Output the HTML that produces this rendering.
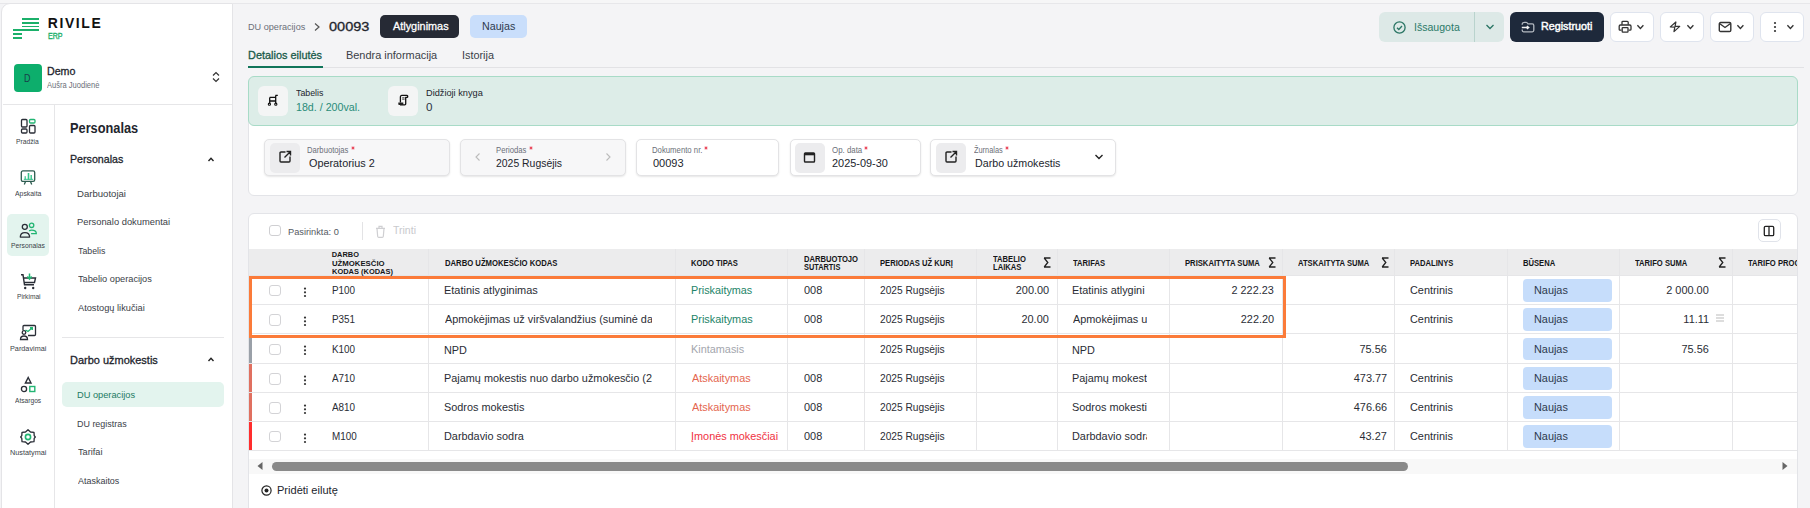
<!DOCTYPE html>
<html><head><meta charset="utf-8"><style>
html,body{margin:0;padding:0;}
body{width:1810px;height:508px;overflow:hidden;background:#f4f4f6;position:relative;font-family:"Liberation Sans",sans-serif;}
.b{position:absolute;}
.t{position:absolute;white-space:nowrap;}
.clip{overflow:hidden;}
</style></head><body>
<div class="b" style="left:0.00px;top:0.00px;width:1810.00px;height:3.00px;background:#f6f6f7;"></div>
<div class="b" style="left:0.00px;top:3.00px;width:1810.00px;height:1.00px;background:#e7e7ea;"></div>
<div class="b" style="left:1.20px;top:3.00px;width:231.80px;height:517.00px;background:#fff;border:1px solid #e4e4e7;border-radius:9px 0 0 0;box-sizing:border-box;"></div>
<div class="b" style="left:22.00px;top:18.10px;width:17.00px;height:1.80px;background:#1bb06a;"></div>
<div class="b" style="left:22.00px;top:21.80px;width:17.00px;height:1.80px;background:#1bb06a;"></div>
<div class="b" style="left:22.00px;top:25.50px;width:17.00px;height:1.80px;background:#1bb06a;"></div>
<div class="b" style="left:13.00px;top:29.30px;width:26.00px;height:1.80px;background:#1bb06a;"></div>
<div class="b" style="left:13.00px;top:33.10px;width:9.00px;height:1.80px;background:#1bb06a;"></div>
<div class="b" style="left:13.00px;top:36.90px;width:9.00px;height:1.80px;background:#1bb06a;"></div>
<div id="t0" class="t" style="left:47.79px;top:17px;font-size:13.95px;line-height:13.95px;font-weight:700;color:#111;letter-spacing:1.6px;">RIVILE</div>
<div id="t1" class="t" style="left:47.81px;top:32px;font-size:8.43px;line-height:8.43px;transform:scaleX(0.8412);transform-origin:left;color:#1bb06a;-webkit-text-stroke:0.35px #1bb06a;">ERP</div>
<div class="b" style="left:14.00px;top:64.00px;width:28.00px;height:28.00px;background:#0dae6c;border-radius:4px;"></div>
<div id="t2" class="t" style="left:24.28px;top:73px;font-size:11.34px;line-height:11.34px;transform:scaleX(0.7875);transform-origin:left;color:#17414a;">D</div>
<div id="t3" class="t" style="left:47.19px;top:66px;font-size:10.61px;line-height:10.61px;transform:scaleX(1.0036);transform-origin:left;font-weight:400;-webkit-text-stroke:0.3px #22252d;color:#22252d;">Demo</div>
<div id="t4" class="t" style="left:47.36px;top:81px;font-size:8.72px;line-height:8.72px;transform:scaleX(0.8656);transform-origin:left;color:#6b6f78;">Aušra Juodienė</div>
<svg class="b" style="left:211.00px;top:71.00px" width="10" height="12" viewBox="0 0 10 12"><path d="M2 4.5 L5 1.5 L8 4.5 M2 7.5 L5 10.5 L8 7.5" fill="none" stroke="#333" stroke-width="1.2"/></svg>
<div class="b" style="left:2.50px;top:104.00px;width:229.50px;height:1.00px;background:#e6e6e8;"></div>
<div class="b" style="left:54.00px;top:105.00px;width:1.00px;height:415.00px;background:#e6e6e8;"></div>
<div class="b" style="left:7.00px;top:214.00px;width:42.00px;height:42.00px;background:#e3f4ee;border-radius:5px;"></div>
<div id="t5" class="t" style="left:15.80px;top:138px;font-size:7.20px;line-height:7.20px;transform:scaleX(0.9360);transform-origin:left;color:#3b3f48;">Pradžia</div>
<div id="t6" class="t" style="left:14.58px;top:190px;font-size:7.20px;line-height:7.20px;transform:scaleX(0.9571);transform-origin:left;color:#3b3f48;">Apskaita</div>
<div id="t7" class="t" style="left:11.19px;top:242px;font-size:7.20px;line-height:7.20px;transform:scaleX(0.9389);transform-origin:left;color:#3b3f48;">Personalas</div>
<div id="t8" class="t" style="left:16.57px;top:293px;font-size:7.20px;line-height:7.20px;transform:scaleX(0.9231);transform-origin:left;color:#3b3f48;">Pirkimai</div>
<div id="t9" class="t" style="left:9.78px;top:345px;font-size:7.20px;line-height:7.20px;transform:scaleX(1.0114);transform-origin:left;color:#3b3f48;">Pardavimai</div>
<div id="t10" class="t" style="left:14.57px;top:397px;font-size:7.20px;line-height:7.20px;transform:scaleX(0.9207);transform-origin:left;color:#3b3f48;">Atsargos</div>
<div id="t11" class="t" style="left:9.78px;top:449px;font-size:7.20px;line-height:7.20px;transform:scaleX(1.0114);transform-origin:left;color:#3b3f48;">Nustatymai</div>
<svg class="b" style="left:20.00px;top:118.00px" width="17" height="17" viewBox="0 0 17 17"><rect x="1.5" y="1.5" width="5.5" height="7.5" rx="1" fill="none" stroke="#2a2e37" stroke-width="1.3"/><rect x="1.5" y="11" width="5.5" height="4" rx="1" fill="none" stroke="#2a2e37" stroke-width="1.3"/><rect x="9.5" y="1.5" width="5.5" height="3.5" rx="1" fill="none" stroke="#22b573" stroke-width="1.3"/><rect x="9.5" y="7.5" width="5.5" height="7.5" rx="1" fill="none" stroke="#2a2e37" stroke-width="1.3"/></svg>
<svg class="b" style="left:20.00px;top:169.00px" width="17" height="17" viewBox="0 0 17 17"><rect x="1.3" y="1.9" width="13.4" height="10.5" rx="1.6" fill="none" stroke="#2d5c50" stroke-width="1.3"/><rect x="4.6" y="7.2" width="1.2" height="3.5" fill="#35c28a"/><rect x="7.7" y="4" width="1.6" height="6.7" fill="#35c28a"/><rect x="10.5" y="6" width="1.4" height="4.7" fill="#35c28a"/><rect x="3.8" y="9.8" width="9.4" height="1" fill="#35c28a"/><path d="M5.4 12.8 L4.3 15.6 M10.6 12.8 L11.7 15.6" stroke="#2d5c50" stroke-width="1.3"/></svg>
<svg class="b" style="left:19.00px;top:222.00px" width="19" height="17" viewBox="0 0 19 17"><circle cx="12.6" cy="3.3" r="2.2" fill="none" stroke="#22b573" stroke-width="1.3"/><path d="M10.1 8.9 C10.9 8.4 11.7 8.2 12.7 8.2 C15.5 8.2 17.3 9.6 17.3 11.6 L12.1 11.6" fill="none" stroke="#22b573" stroke-width="1.3"/><circle cx="5.8" cy="4.8" r="2.5" fill="none" stroke="#2a2e37" stroke-width="1.3"/><path d="M1.3 15.1 C1.3 12.3 3.2 10.6 5.9 10.6 C8.6 10.6 10.6 12.3 10.6 15.1 Z" fill="#e3f4ee" stroke="#2a2e37" stroke-width="1.3" stroke-linejoin="round"/></svg>
<svg class="b" style="left:20.00px;top:273.00px" width="17" height="17" viewBox="0 0 17 17"><path d="M1 1.8 L3 1.8 L4.5 11.8 L14 11.8 M3.8 5 L15.5 5 L14.5 9.5 L4.3 9.5" fill="none" stroke="#2a2e37" stroke-width="1.4"/><circle cx="5.2" cy="15" r="1.2" fill="#2a2e37"/><circle cx="13.2" cy="15" r="1.2" fill="#2a2e37"/><path d="M9.5 0.5 L9.5 5.5 M7.3 3.5 L9.5 6 L11.7 3.5" fill="none" stroke="#22b573" stroke-width="1.5"/></svg>
<svg class="b" style="left:19.00px;top:324.00px" width="18" height="17" viewBox="0 0 18 17"><path d="M4 6 L4 2.5 C4 2 4.5 1.5 5 1.5 L15.5 1.5 C16 1.5 16.5 2 16.5 2.5 L16.5 10.5 C16.5 11 16 11.5 15.5 11.5 L9 11.5" fill="none" stroke="#2a2e37" stroke-width="1.3"/><circle cx="5" cy="8.5" r="1.8" fill="none" stroke="#2a2e37" stroke-width="1.3"/><path d="M1.5 15.5 C1.5 12.5 3 12 5 12 C7 12 8.5 12.5 8.5 15.5 Z" fill="none" stroke="#2a2e37" stroke-width="1.3"/><path d="M6.5 6 L9 7.5 L13 4 M11 3.8 L13.3 3.8 L13.3 6" fill="none" stroke="#22b573" stroke-width="1.4"/></svg>
<svg class="b" style="left:20.00px;top:376.00px" width="17" height="18" viewBox="0 0 17 18"><path d="M8.2 1.5 L11 7 L5.4 7 Z" fill="none" stroke="#2a2e37" stroke-width="1.4"/><circle cx="4" cy="13" r="2.6" fill="none" stroke="#2a2e37" stroke-width="1.3"/><rect x="9.8" y="10.5" width="5" height="5" fill="none" stroke="#22b573" stroke-width="1.4"/></svg>
<svg class="b" style="left:20.00px;top:429.00px" width="16" height="16" viewBox="0 0 16 16"><path d="M8 0.8 L10.5 3 L14 3.3 L14.2 6.6 L15.3 8 L14.2 9.4 L14 12.7 L10.5 13 L8 15.2 L5.5 13 L2 12.7 L1.8 9.4 L0.7 8 L1.8 6.6 L2 3.3 L5.5 3 Z" fill="none" stroke="#2a2e37" stroke-width="1.3" stroke-linejoin="round"/><circle cx="8" cy="8" r="2.6" fill="none" stroke="#22b573" stroke-width="1.6"/></svg>
<div id="t12" class="t" style="left:69.66px;top:121px;font-size:14.10px;line-height:14.10px;transform:scaleX(0.9067);transform-origin:left;font-weight:700;color:#22252d;">Personalas</div>
<div id="t13" class="t" style="left:69.65px;top:154px;font-size:11.48px;line-height:11.48px;transform:scaleX(0.9298);transform-origin:left;font-weight:400;-webkit-text-stroke:0.3px #22252d;color:#22252d;">Personalas</div>
<svg class="b" style="left:207.00px;top:156.00px" width="8" height="7" viewBox="0 0 8 7"><path d="M1.5 5 L4 2.3 L6.5 5" fill="none" stroke="#222" stroke-width="1.4"/></svg>
<div id="t14" class="t" style="left:77.38px;top:190px;font-size:9.30px;line-height:9.30px;transform:scaleX(1.0298);transform-origin:left;color:#3a3e47;">Darbuotojai</div>
<div id="t15" class="t" style="left:77.39px;top:218px;font-size:9.30px;line-height:9.30px;transform:scaleX(1.0054);transform-origin:left;color:#3a3e47;">Personalo dokumentai</div>
<div id="t16" class="t" style="left:78.35px;top:247px;font-size:9.30px;line-height:9.30px;transform:scaleX(0.9433);transform-origin:left;color:#3a3e47;">Tabelis</div>
<div id="t17" class="t" style="left:78.38px;top:275px;font-size:9.30px;line-height:9.30px;transform:scaleX(0.9920);transform-origin:left;color:#3a3e47;">Tabelio operacijos</div>
<div id="t18" class="t" style="left:78.38px;top:304px;font-size:9.30px;line-height:9.30px;transform:scaleX(0.9941);transform-origin:left;color:#3a3e47;">Atostogų likučiai</div>
<div class="b" style="left:62.00px;top:337.00px;width:161.50px;height:1.00px;background:#e6e6e8;"></div>
<div id="t19" class="t" style="left:69.80px;top:355px;font-size:11.19px;line-height:11.19px;transform:scaleX(0.9809);transform-origin:left;-webkit-text-stroke:0.3px #22252d;color:#22252d;">Darbo užmokestis</div>
<svg class="b" style="left:207.00px;top:356.00px" width="8" height="7" viewBox="0 0 8 7"><path d="M1.5 5 L4 2.3 L6.5 5" fill="none" stroke="#222" stroke-width="1.4"/></svg>
<div class="b" style="left:62.40px;top:382.00px;width:161.60px;height:24.50px;background:#e3f4ee;border-radius:5px;"></div>
<div id="t20" class="t" style="left:77.39px;top:391px;font-size:9.30px;line-height:9.30px;transform:scaleX(0.9948);transform-origin:left;color:#1d7a63;">DU operacijos</div>
<div id="t21" class="t" style="left:77.40px;top:420px;font-size:9.30px;line-height:9.30px;transform:scaleX(0.9615);transform-origin:left;color:#3a3e47;">DU registras</div>
<div id="t22" class="t" style="left:78.38px;top:448px;font-size:9.30px;line-height:9.30px;transform:scaleX(0.9846);transform-origin:left;color:#3a3e47;">Tarifai</div>
<div id="t23" class="t" style="left:78.36px;top:477px;font-size:9.30px;line-height:9.30px;transform:scaleX(0.9636);transform-origin:left;color:#3a3e47;">Ataskaitos</div>
<div id="t24" class="t" style="left:248.01px;top:23px;font-size:9.30px;line-height:9.30px;transform:scaleX(0.9810);transform-origin:left;color:#6b6f78;">DU operacijos</div>
<svg class="b" style="left:313.00px;top:22.00px" width="8" height="10" viewBox="0 0 8 10"><path d="M2 1.5 L6 5 L2 8.5" fill="none" stroke="#555" stroke-width="1.2"/></svg>
<div id="t25" class="t" style="left:328.58px;top:20px;font-size:13.52px;line-height:13.52px;transform:scaleX(1.0757);transform-origin:left;-webkit-text-stroke:0.3px #22252d;color:#22252d;">00093</div>
<div class="b" style="left:380.00px;top:15.00px;width:79.00px;height:23.00px;background:#262a35;border-radius:5px;"></div>
<div id="t26" class="t" style="left:392.58px;top:21px;font-size:11.05px;line-height:11.05px;transform:scaleX(0.9842);transform-origin:left;-webkit-text-stroke:0.3px #fff;color:#fff;">Atlyginimas</div>
<div class="b" style="left:470.00px;top:15.00px;width:56.50px;height:23.00px;background:#c9defb;border-radius:5px;"></div>
<div id="t27" class="t" style="left:481.79px;top:21px;font-size:11.05px;line-height:11.05px;transform:scaleX(0.9676);transform-origin:left;color:#2e3a4e;">Naujas</div>
<div id="t28" class="t" style="left:248.40px;top:50px;font-size:11.48px;line-height:11.48px;transform:scaleX(0.9526);transform-origin:left;color:#185a49;-webkit-text-stroke:0.3px #185a49;">Detalios eilutės</div>
<div id="t29" class="t" style="left:345.61px;top:50px;font-size:11.48px;line-height:11.48px;transform:scaleX(0.9531);transform-origin:left;color:#3a3e47;">Bendra informacija</div>
<div id="t30" class="t" style="left:462.40px;top:50px;font-size:11.48px;line-height:11.48px;transform:scaleX(0.9471);transform-origin:left;color:#3a3e47;">Istorija</div>
<div class="b" style="left:248.00px;top:66.50px;width:1556.00px;height:1.00px;background:#e2e2e5;"></div>
<div class="b" style="left:248.00px;top:65.50px;width:75.00px;height:2.10px;background:#11755a;"></div>
<div class="b" style="left:1379.00px;top:12.00px;width:125.00px;height:30.00px;background:#dde9e7;border-radius:6px;"></div>
<div class="b" style="left:1474.00px;top:12.00px;width:1.00px;height:30.00px;background:#b9d3cd;"></div>
<svg class="b" style="left:1393.00px;top:21.00px" width="13" height="13" viewBox="0 0 13 13"><circle cx="6.5" cy="6.5" r="5.6" fill="none" stroke="#2a7564" stroke-width="1.3"/><path d="M4 6.8 L5.8 8.5 L9 5" fill="none" stroke="#2a7564" stroke-width="1.3"/></svg>
<div id="t31" class="t" style="left:1414.19px;top:22px;font-size:11.48px;line-height:11.48px;transform:scaleX(0.9200);transform-origin:left;color:#2b7a68;">Išsaugota</div>
<svg class="b" style="left:1485.00px;top:23.00px" width="10" height="8" viewBox="0 0 10 8"><path d="M1.5 2 L5 5.5 L8.5 2" fill="none" stroke="#2a7564" stroke-width="1.3"/></svg>
<div class="b" style="left:1510.00px;top:12.00px;width:94.00px;height:30.00px;background:#1e293b;border-radius:6px;"></div>
<svg class="b" style="left:1521.00px;top:20.00px" width="14" height="14" viewBox="0 0 14 14"><path d="M1.2 4.8 L1.2 3.8 C1.4 2.7 2.2 2.3 3.5 2.3 L5.2 2.3 C6 2.3 6.5 3 7 3.8 L11.3 3.8 C12.2 3.8 12.8 4.5 12.8 5.5 L12.8 10.3 C12.8 11.2 12.2 11.8 11.3 11.8 L2.6 11.8 C1.8 11.8 1.2 11.2 1.2 10.3 L1.2 9.6" fill="none" stroke="#b4b9c1" stroke-width="1.3"/><path d="M0.8 7.5 L7.6 7.5 M5.9 5.9 L7.8 7.5 L5.9 9.1" fill="none" stroke="#f2f2f2" stroke-width="1.3"/></svg>
<div id="t32" class="t" style="left:1541.19px;top:21px;font-size:11.19px;line-height:11.19px;transform:scaleX(0.9604);transform-origin:left;color:#fff;-webkit-text-stroke:0.45px #fff;">Registruoti</div>
<div class="b" style="left:1610.00px;top:12.00px;width:43.50px;height:30.00px;background:#fff;border:1px solid #dfe4ee;border-radius:6px;box-sizing:border-box;"></div>
<svg class="b" style="left:1635.60px;top:23.00px" width="9" height="8" viewBox="0 0 9 8"><path d="M1.4 2.2 L4.4 5.5 L7.4 2.2" fill="none" stroke="#333" stroke-width="1.3"/></svg>
<div class="b" style="left:1660.00px;top:12.00px;width:43.50px;height:30.00px;background:#fff;border:1px solid #dfe4ee;border-radius:6px;box-sizing:border-box;"></div>
<svg class="b" style="left:1685.60px;top:23.00px" width="9" height="8" viewBox="0 0 9 8"><path d="M1.4 2.2 L4.4 5.5 L7.4 2.2" fill="none" stroke="#333" stroke-width="1.3"/></svg>
<div class="b" style="left:1710.00px;top:12.00px;width:43.50px;height:30.00px;background:#fff;border:1px solid #dfe4ee;border-radius:6px;box-sizing:border-box;"></div>
<svg class="b" style="left:1735.60px;top:23.00px" width="9" height="8" viewBox="0 0 9 8"><path d="M1.4 2.2 L4.4 5.5 L7.4 2.2" fill="none" stroke="#333" stroke-width="1.3"/></svg>
<div class="b" style="left:1760.00px;top:12.00px;width:43.50px;height:30.00px;background:#fff;border:1px solid #dfe4ee;border-radius:6px;box-sizing:border-box;"></div>
<svg class="b" style="left:1785.60px;top:23.00px" width="9" height="8" viewBox="0 0 9 8"><path d="M1.4 2.2 L4.4 5.5 L7.4 2.2" fill="none" stroke="#333" stroke-width="1.3"/></svg>
<svg class="b" style="left:1618.00px;top:20.00px" width="14" height="14" viewBox="0 0 14 14"><path d="M4 4.8 L4 2.2 C4 1.6 4.4 1.3 5 1.3 L9.2 1.3 C9.8 1.3 10.2 1.6 10.2 2.2 L10.2 4.8" fill="none" stroke="#333" stroke-width="1.3"/><path d="M3.6 10.2 L2.2 10.2 C1.6 10.2 1.2 9.8 1.2 9.2 L1.2 6.2 C1.2 5.5 1.7 5 2.4 5 L11.8 5 C12.5 5 13 5.5 13 6.2 L13 9.2 C13 9.8 12.6 10.2 12 10.2 L10.6 10.2" fill="none" stroke="#333" stroke-width="1.3"/><rect x="4.2" y="7.6" width="5.8" height="4.6" rx="0.6" fill="none" stroke="#333" stroke-width="1.3"/></svg>
<svg class="b" style="left:1668.00px;top:20.00px" width="14" height="14" viewBox="0 0 14 14"><path d="M7.9 2 L2.3 6.9 L6.8 7.2 L6 11.6 L11.7 6.4 L7.1 6.1 Z" fill="none" stroke="#333" stroke-width="1.25" stroke-linejoin="round"/></svg>
<svg class="b" style="left:1718.00px;top:21.00px" width="14" height="12" viewBox="0 0 14 12"><rect x="1.3" y="1.5" width="11.5" height="9" rx="1.3" fill="none" stroke="#333" stroke-width="1.4"/><path d="M1.5 2.5 L7 6.5 L12.5 2.5" fill="none" stroke="#333" stroke-width="1.4"/></svg>
<svg class="b" style="left:1773.00px;top:21.00px" width="4" height="12" viewBox="0 0 4 12"><circle cx="2" cy="2" r="1.1" fill="#333"/><circle cx="2" cy="6" r="1.1" fill="#333"/><circle cx="2" cy="10" r="1.1" fill="#333"/></svg>
<div class="b" style="left:248.00px;top:118.00px;width:1549.50px;height:78.00px;background:#fff;border:1px solid #e3e4e8;border-radius:6px;box-sizing:border-box;"></div>
<div class="b" style="left:248.00px;top:76.00px;width:1549.50px;height:50.00px;background:#ddede8;border:1px solid #a8dbc7;border-radius:6px;box-sizing:border-box;"></div>
<div class="b" style="left:258.00px;top:86.00px;width:30.00px;height:30.00px;background:#f4f5f5;border-radius:6px;"></div>
<div class="b" style="left:388.00px;top:86.00px;width:30.00px;height:30.00px;background:#f4f5f5;border-radius:6px;"></div>
<svg class="b" style="left:266.00px;top:94.00px" width="14" height="14" viewBox="0 0 14 14"><path d="M3.7 3.4 L9.7 3.4 M3.7 7 L9.7 7 M3.7 3.4 L3.7 9.2 M9.7 1.4 L9.7 9.2 M9.4 1.4 L11.8 1.4" fill="none" stroke="#111" stroke-width="1.3"/><circle cx="3.4" cy="10.2" r="1.1" fill="none" stroke="#111" stroke-width="1.1"/><circle cx="9.8" cy="10.2" r="1.1" fill="none" stroke="#111" stroke-width="1.1"/></svg>
<svg class="b" style="left:396.00px;top:94.00px" width="14" height="14" viewBox="0 0 14 14"><path d="M4.4 8.6 L4.4 3 C4.4 2 4.9 1.4 5.9 1.4 L11 1.4 C12 1.4 12 3.4 11 3.4 L9.7 3.4 L9.7 10 C9.7 10.5 9.3 10.8 8.8 10.8 L4 10.8" fill="none" stroke="#111" stroke-width="1.3" stroke-linejoin="round"/><path d="M2.3 8.4 L7.3 8.4 L7.3 10.9 L3.3 10.9 C2.7 10.9 2.3 10.5 2.3 9.9 Z" fill="#222"/><path d="M6.2 3.8 L8.6 3.8 M6.2 5.2 L8.6 5.2" stroke="#333" stroke-width="0.9"/></svg>
<div id="t33" class="t" style="left:296.00px;top:88px;font-size:9.45px;line-height:9.45px;transform:scaleX(0.9333);transform-origin:left;color:#22252d;">Tabelis</div>
<div id="t34" class="t" style="left:296.00px;top:101px;font-size:11.63px;line-height:11.63px;transform:scaleX(0.9174);transform-origin:left;color:#2a8c78;">18d. / 200val.</div>
<div id="t35" class="t" style="left:425.59px;top:88px;font-size:9.45px;line-height:9.45px;transform:scaleX(0.9746);transform-origin:left;color:#22252d;">Didžioji knyga</div>
<div id="t36" class="t" style="left:426.00px;top:101px;font-size:11.63px;line-height:11.63px;color:#2c3444;">0</div>
<div class="b" style="left:264.40px;top:139.00px;width:185.60px;height:36.50px;background:#f7f7f8;border:1px solid #e3e3e5;box-shadow:0 1px 2px rgba(0,0,0,0.10);box-sizing:border-box;border-radius:5px;"></div>
<div class="b" style="left:270.00px;top:143.00px;width:30.00px;height:29.60px;background:#ececee;border-radius:5px;"></div>
<svg class="b" style="left:278.00px;top:150.00px" width="14" height="14" viewBox="0 0 14 14"><path d="M7.5 2 L3 2 C2.4 2 2 2.4 2 3 L2 11 C2 11.6 2.4 12 3 12 L11 12 C11.6 12 12 11.6 12 11 L12 6.5 M6.5 7.5 L12.5 1.5 M8.5 1.5 L12.5 1.5 L12.5 5.5" fill="none" stroke="#222" stroke-width="1.4"/></svg>
<div id="t37" class="t" style="left:307.19px;top:147px;font-size:8.20px;line-height:8.20px;transform:scaleX(0.9378);transform-origin:left;color:#6b6f78;">Darbuotojas</div>
<svg class="b" style="left:351.20px;top:146.20px" width="4" height="4" viewBox="0 0 4 4"><path d="M2 0.4 L2 3.6 M0.6 1.2 L3.4 2.8 M0.6 2.8 L3.4 1.2" stroke="#e8334a" stroke-width="0.9"/></svg>
<div id="t38" class="t" style="left:308.80px;top:158px;font-size:11.48px;line-height:11.48px;transform:scaleX(0.9449);transform-origin:left;color:#22252d;">Operatorius 2</div>
<div class="b" style="left:459.50px;top:139.00px;width:166.80px;height:36.80px;background:#f7f7f8;border:1px solid #e3e3e5;box-shadow:0 1px 2px rgba(0,0,0,0.10);box-sizing:border-box;border-radius:5px;"></div>
<svg class="b" style="left:474.00px;top:152.00px" width="8" height="10" viewBox="0 0 8 10"><path d="M5.5 1.5 L2 5 L5.5 8.5" fill="none" stroke="#bbb" stroke-width="1.1"/></svg>
<svg class="b" style="left:604.00px;top:152.00px" width="8" height="10" viewBox="0 0 8 10"><path d="M2.5 1.5 L6 5 L2.5 8.5" fill="none" stroke="#bbb" stroke-width="1.1"/></svg>
<div id="t39" class="t" style="left:496.19px;top:147px;font-size:8.20px;line-height:8.20px;transform:scaleX(0.9394);transform-origin:left;color:#6b6f78;">Periodas</div>
<svg class="b" style="left:529.20px;top:146.20px" width="4" height="4" viewBox="0 0 4 4"><path d="M2 0.4 L2 3.6 M0.6 1.2 L3.4 2.8 M0.6 2.8 L3.4 1.2" stroke="#e8334a" stroke-width="0.9"/></svg>
<div id="t40" class="t" style="left:496.19px;top:158px;font-size:11.48px;line-height:11.48px;transform:scaleX(0.9082);transform-origin:left;color:#22252d;">2025 Rugsėjis</div>
<div class="b" style="left:636.40px;top:139.00px;width:143.10px;height:36.50px;background:#fff;border:1px solid #e3e3e5;box-shadow:0 1px 2px rgba(0,0,0,0.10);box-sizing:border-box;border-radius:5px;"></div>
<div id="t41" class="t" style="left:652.00px;top:147px;font-size:8.20px;line-height:8.20px;transform:scaleX(0.9472);transform-origin:left;color:#6b6f78;">Dokumento nr.</div>
<svg class="b" style="left:704.00px;top:146.20px" width="4" height="4" viewBox="0 0 4 4"><path d="M2 0.4 L2 3.6 M0.6 1.2 L3.4 2.8 M0.6 2.8 L3.4 1.2" stroke="#e8334a" stroke-width="0.9"/></svg>
<div id="t42" class="t" style="left:652.77px;top:158px;font-size:11.48px;line-height:11.48px;transform:scaleX(0.9594);transform-origin:left;color:#22252d;">00093</div>
<div class="b" style="left:789.50px;top:139.00px;width:131.10px;height:36.50px;background:#fff;border:1px solid #e3e3e5;box-shadow:0 1px 2px rgba(0,0,0,0.10);box-sizing:border-box;border-radius:5px;"></div>
<div class="b" style="left:795.30px;top:143.00px;width:29.70px;height:29.60px;background:#ececee;border-radius:5px;"></div>
<svg class="b" style="left:803.00px;top:151.00px" width="14" height="13" viewBox="0 0 14 13"><rect x="1.5" y="2" width="10" height="9" rx="0.8" fill="none" stroke="#222" stroke-width="1.4"/><rect x="1.5" y="2" width="10" height="2.3" fill="#222"/></svg>
<div id="t43" class="t" style="left:832.38px;top:147px;font-size:8.20px;line-height:8.20px;transform:scaleX(0.9625);transform-origin:left;color:#6b6f78;">Op. data</div>
<svg class="b" style="left:864.40px;top:146.20px" width="4" height="4" viewBox="0 0 4 4"><path d="M2 0.4 L2 3.6 M0.6 1.2 L3.4 2.8 M0.6 2.8 L3.4 1.2" stroke="#e8334a" stroke-width="0.9"/></svg>
<div id="t44" class="t" style="left:832.38px;top:158px;font-size:11.48px;line-height:11.48px;transform:scaleX(0.9508);transform-origin:left;color:#22252d;">2025-09-30</div>
<div class="b" style="left:930.30px;top:139.00px;width:185.40px;height:36.50px;background:#fff;border:1px solid #e3e3e5;box-shadow:0 1px 2px rgba(0,0,0,0.10);box-sizing:border-box;border-radius:5px;"></div>
<div class="b" style="left:936.00px;top:143.00px;width:30.00px;height:29.60px;background:#ececee;border-radius:5px;"></div>
<svg class="b" style="left:944.00px;top:150.00px" width="14" height="14" viewBox="0 0 14 14"><path d="M7.5 2 L3 2 C2.4 2 2 2.4 2 3 L2 11 C2 11.6 2.4 12 3 12 L11 12 C11.6 12 12 11.6 12 11 L12 6.5 M6.5 7.5 L12.5 1.5 M8.5 1.5 L12.5 1.5 L12.5 5.5" fill="none" stroke="#222" stroke-width="1.4"/></svg>
<div id="t45" class="t" style="left:973.95px;top:147px;font-size:8.20px;line-height:8.20px;transform:scaleX(0.9000);transform-origin:left;color:#6b6f78;">Žurnalas</div>
<svg class="b" style="left:1004.60px;top:146.20px" width="4" height="4" viewBox="0 0 4 4"><path d="M2 0.4 L2 3.6 M0.6 1.2 L3.4 2.8 M0.6 2.8 L3.4 1.2" stroke="#e8334a" stroke-width="0.9"/></svg>
<div id="t46" class="t" style="left:974.80px;top:158px;font-size:11.48px;line-height:11.48px;transform:scaleX(0.9304);transform-origin:left;color:#22252d;">Darbo užmokestis</div>
<svg class="b" style="left:1094.00px;top:153.00px" width="10" height="8" viewBox="0 0 10 8"><path d="M1.5 2 L5 5.5 L8.5 2" fill="none" stroke="#222" stroke-width="1.4"/></svg>
<div class="b" style="left:248.00px;top:212.50px;width:1549.50px;height:307.50px;background:#fff;border:1px solid #e3e4e8;border-radius:6px;box-sizing:border-box;"></div>
<div class="b" style="left:269.30px;top:225.20px;width:11.40px;height:11.30px;border:1.2px solid #cfcfd2;border-radius:3px;box-sizing:border-box;"></div>
<div id="t47" class="t" style="left:288.03px;top:227px;font-size:9.88px;line-height:9.88px;transform:scaleX(0.9352);transform-origin:left;color:#555a63;">Pasirinkta: 0</div>
<div class="b" style="left:362.00px;top:222.00px;width:1.00px;height:18.00px;background:#e3e3e5;"></div>
<svg class="b" style="left:374.50px;top:224.50px" width="11" height="13" viewBox="0 0 11 13"><path d="M2 3.5 L9 3.5 L8.3 11.5 C8.2 12 7.8 12.3 7.3 12.3 L3.7 12.3 C3.2 12.3 2.8 12 2.7 11.5 Z M1 3.3 L10 3.3 M4 3 L4 1.3 L7 1.3 L7 3" fill="none" stroke="#cfcfd2" stroke-width="1.2"/></svg>
<div id="t48" class="t" style="left:393.19px;top:225px;font-size:11.34px;line-height:11.34px;transform:scaleX(0.9280);transform-origin:left;color:#c9cacd;">Trinti</div>
<div class="b" style="left:1757.50px;top:219.30px;width:23.50px;height:23.10px;background:#fff;border:1px solid #e0e3ea;border-radius:5px;box-sizing:border-box;"></div>
<svg class="b" style="left:1763.00px;top:225.00px" width="12" height="12" viewBox="0 0 12 12"><rect x="1.3" y="1.3" width="9.4" height="9.4" rx="1.2" fill="none" stroke="#222" stroke-width="1.3"/><path d="M6 1.3 L6 10.7" stroke="#222" stroke-width="1.3"/></svg>
<div class="b" style="left:249.00px;top:249.10px;width:1547.80px;height:26.20px;background:#ececed;"></div>
<div class="b" style="left:249.00px;top:274.80px;width:1547.80px;height:1.00px;background:#e6e6e8;"></div>
<div class="b" style="left:249.00px;top:303.60px;width:1547.80px;height:1.00px;background:#e6e6e8;"></div>
<div class="b" style="left:249.00px;top:333.00px;width:1547.80px;height:1.00px;background:#e6e6e8;"></div>
<div class="b" style="left:249.00px;top:362.70px;width:1547.80px;height:1.00px;background:#e6e6e8;"></div>
<div class="b" style="left:249.00px;top:391.80px;width:1547.80px;height:1.00px;background:#e6e6e8;"></div>
<div class="b" style="left:249.00px;top:420.70px;width:1547.80px;height:1.00px;background:#e6e6e8;"></div>
<div class="b" style="left:249.00px;top:449.70px;width:1547.80px;height:1.00px;background:#e6e6e8;"></div>
<div class="b" style="left:427.50px;top:249.10px;width:1.00px;height:201.10px;background:#e6e6e8;"></div>
<div class="b" style="left:675.10px;top:249.10px;width:1.00px;height:201.10px;background:#e6e6e8;"></div>
<div class="b" style="left:787.30px;top:249.10px;width:1.00px;height:201.10px;background:#e6e6e8;"></div>
<div class="b" style="left:864.00px;top:249.10px;width:1.00px;height:201.10px;background:#e6e6e8;"></div>
<div class="b" style="left:976.00px;top:249.10px;width:1.00px;height:201.10px;background:#e6e6e8;"></div>
<div class="b" style="left:1057.00px;top:249.10px;width:1.00px;height:201.10px;background:#e6e6e8;"></div>
<div class="b" style="left:1169.00px;top:249.10px;width:1.00px;height:201.10px;background:#e6e6e8;"></div>
<div class="b" style="left:1282.20px;top:249.10px;width:1.00px;height:201.10px;background:#e6e6e8;"></div>
<div class="b" style="left:1393.70px;top:249.10px;width:1.00px;height:201.10px;background:#e6e6e8;"></div>
<div class="b" style="left:1507.00px;top:249.10px;width:1.00px;height:201.10px;background:#e6e6e8;"></div>
<div class="b" style="left:1619.20px;top:249.10px;width:1.00px;height:201.10px;background:#e6e6e8;"></div>
<div class="b" style="left:1731.90px;top:249.10px;width:1.00px;height:201.10px;background:#e6e6e8;"></div>
<div id="t49" class="t" style="left:331.79px;top:251px;font-size:7.40px;line-height:7.40px;font-weight:700;color:#161719;">DARBO</div>
<div id="t50" class="t" style="left:331.79px;top:260px;font-size:7.40px;line-height:7.40px;transform:scaleX(1.0500);transform-origin:left;font-weight:700;color:#161719;">UŽMOKESČIO</div>
<div id="t51" class="t" style="left:331.79px;top:268px;font-size:7.40px;line-height:7.40px;transform:scaleX(1.0100);transform-origin:left;font-weight:700;color:#161719;">KODAS (KODAS)</div>
<div id="t52" class="t" style="left:444.58px;top:260px;font-size:8.20px;line-height:8.20px;transform:scaleX(0.9400);transform-origin:left;font-weight:700;color:#161719;">DARBO UŽMOKESČIO KODAS</div>
<div id="t53" class="t" style="left:690.61px;top:260px;font-size:8.20px;line-height:8.20px;transform:scaleX(0.9300);transform-origin:left;font-weight:700;color:#161719;">KODO TIPAS</div>
<div id="t54" class="t" style="left:803.61px;top:256px;font-size:8.20px;line-height:8.20px;transform:scaleX(0.9300);transform-origin:left;font-weight:700;color:#161719;">DARBUOTOJO</div>
<div id="t55" class="t" style="left:803.62px;top:264px;font-size:8.20px;line-height:8.20px;transform:scaleX(0.9000);transform-origin:left;font-weight:700;color:#161719;">SUTARTIS</div>
<div id="t56" class="t" style="left:880.00px;top:260px;font-size:8.20px;line-height:8.20px;transform:scaleX(0.9300);transform-origin:left;font-weight:700;color:#161719;">PERIODAS UŽ KURĮ</div>
<div id="t57" class="t" style="left:993.15px;top:256px;font-size:8.20px;line-height:8.20px;transform:scaleX(0.9300);transform-origin:left;font-weight:700;color:#161719;">TABELIO</div>
<div id="t58" class="t" style="left:993.15px;top:264px;font-size:8.20px;line-height:8.20px;transform:scaleX(0.9300);transform-origin:left;font-weight:700;color:#161719;">LAIKAS</div>
<div id="t59" class="t" style="left:1072.76px;top:260px;font-size:8.20px;line-height:8.20px;transform:scaleX(0.9300);transform-origin:left;font-weight:700;color:#161719;">TARIFAS</div>
<div id="t60" class="t" style="left:1185.38px;top:260px;font-size:8.20px;line-height:8.20px;transform:scaleX(0.9350);transform-origin:left;font-weight:700;color:#161719;">PRISKAITYTA SUMA</div>
<div id="t61" class="t" style="left:1298.15px;top:260px;font-size:8.20px;line-height:8.20px;transform:scaleX(0.9300);transform-origin:left;font-weight:700;color:#161719;">ATSKAITYTA SUMA</div>
<div id="t62" class="t" style="left:1410.00px;top:260px;font-size:8.20px;line-height:8.20px;transform:scaleX(0.9300);transform-origin:left;font-weight:700;color:#161719;">PADALINYS</div>
<div id="t63" class="t" style="left:1522.96px;top:260px;font-size:8.20px;line-height:8.20px;transform:scaleX(0.9300);transform-origin:left;font-weight:700;color:#161719;">BŪSENA</div>
<div id="t64" class="t" style="left:1635.37px;top:260px;font-size:8.20px;line-height:8.20px;transform:scaleX(0.9300);transform-origin:left;font-weight:700;color:#161719;">TARIFO SUMA</div>
<div class="b" style="left:1732.5px;top:249px;width:64px;height:27px;overflow:hidden"><div id="t65" class="t" style="left:15.65px;top:11px;font-size:8.20px;line-height:8.20px;transform:scaleX(0.9300);transform-origin:left;font-weight:700;color:#161719;">TARIFO PROC</div>
</div><svg class="b" style="left:1043.00px;top:257.00px" width="9" height="11" viewBox="0 0 9 11"><path d="M1 1 L7.5 1 M1.2 1 L4.8 5.5 L1.2 10 M1 10 L7.5 10" fill="none" stroke="#222" stroke-width="1.3"/></svg>
<svg class="b" style="left:1268.00px;top:257.00px" width="9" height="11" viewBox="0 0 9 11"><path d="M1 1 L7.5 1 M1.2 1 L4.8 5.5 L1.2 10 M1 10 L7.5 10" fill="none" stroke="#222" stroke-width="1.3"/></svg>
<svg class="b" style="left:1381.00px;top:257.00px" width="9" height="11" viewBox="0 0 9 11"><path d="M1 1 L7.5 1 M1.2 1 L4.8 5.5 L1.2 10 M1 10 L7.5 10" fill="none" stroke="#222" stroke-width="1.3"/></svg>
<svg class="b" style="left:1718.00px;top:257.00px" width="9" height="11" viewBox="0 0 9 11"><path d="M1 1 L7.5 1 M1.2 1 L4.8 5.5 L1.2 10 M1 10 L7.5 10" fill="none" stroke="#222" stroke-width="1.3"/></svg>
<div class="b" style="left:269.20px;top:285.10px;width:11.40px;height:11.40px;border:1.2px solid #d3d3d6;border-radius:3px;box-sizing:border-box;"></div>
<svg class="b" style="left:303.20px;top:286.70px" width="4" height="11" viewBox="0 0 4 11"><circle cx="2" cy="1.6" r="1.1" fill="#333"/><circle cx="2" cy="5.3" r="1.1" fill="#333"/><circle cx="2" cy="9" r="1.1" fill="#333"/></svg>
<div id="t66" class="t" style="left:331.81px;top:285px;font-size:11.50px;line-height:11.50px;transform:scaleX(0.8593);transform-origin:left;color:#2a2d35;">P100</div>
<div class="b clip" style="left:444px;top:275.30px;width:208px;height:29px"><div id="t67" class="t" style="left:0.21px;top:10px;font-size:11.50px;line-height:11.50px;transform:scaleX(0.9531);transform-origin:left;color:#2a2d35;">Etatinis atlyginimas</div>
</div><div id="t68" class="t" style="left:690.61px;top:285px;font-size:11.50px;line-height:11.50px;transform:scaleX(0.9385);transform-origin:left;color:#1d8468;">Priskaitymas</div>
<div id="t69" class="t" style="left:804.00px;top:285px;font-size:11.50px;line-height:11.50px;transform:scaleX(0.9526);transform-origin:left;color:#2a2d35;">008</div>
<div id="t70" class="t" style="left:879.80px;top:285px;font-size:11.50px;line-height:11.50px;transform:scaleX(0.8863);transform-origin:left;color:#2a2d35;">2025 Rugsėjis</div>
<div id="t71" class="t" style="right:760.80px;top:285px;font-size:11.50px;line-height:11.50px;transform:scaleX(0.9514);transform-origin:right;color:#2a2d35;">200.00</div>
<div class="b clip" style="left:1072px;top:275.30px;width:74.5px;height:29px"><div id="t72" class="t" style="left:-0.18px;top:10px;font-size:11.50px;line-height:11.50px;transform:scaleX(0.9458);transform-origin:left;color:#2a2d35;">Etatinis atlygini</div>
</div><div id="t73" class="t" style="right:535.80px;top:285px;font-size:11.50px;line-height:11.50px;transform:scaleX(0.9444);transform-origin:right;color:#2a2d35;">2 222.23</div>
<div id="t74" class="t" style="left:1410.00px;top:285px;font-size:11.50px;line-height:11.50px;transform:scaleX(0.9458);transform-origin:left;color:#2a2d35;">Centrinis</div>
<div class="b" style="left:1523.20px;top:278.85px;width:88.60px;height:22.70px;background:#c6ddfb;border-radius:4px;"></div>
<div id="t75" class="t" style="left:1533.80px;top:285px;font-size:11.50px;line-height:11.50px;transform:scaleX(0.9458);transform-origin:left;color:#2e3a4e;">Naujas</div>
<div id="t76" class="t" style="right:101.00px;top:285px;font-size:11.50px;line-height:11.50px;transform:scaleX(0.9495);transform-origin:right;color:#2a2d35;">2 000.00</div>
<div class="b" style="left:269.20px;top:314.20px;width:11.40px;height:11.40px;border:1.2px solid #d3d3d6;border-radius:3px;box-sizing:border-box;"></div>
<svg class="b" style="left:303.20px;top:315.80px" width="4" height="11" viewBox="0 0 4 11"><circle cx="2" cy="1.6" r="1.1" fill="#333"/><circle cx="2" cy="5.3" r="1.1" fill="#333"/><circle cx="2" cy="9" r="1.1" fill="#333"/></svg>
<div id="t77" class="t" style="left:331.81px;top:314px;font-size:11.50px;line-height:11.50px;transform:scaleX(0.8593);transform-origin:left;color:#2a2d35;">P351</div>
<div class="b clip" style="left:444px;top:304.10px;width:208px;height:29px"><div id="t78" class="t" style="left:1.16px;top:10px;font-size:11.50px;line-height:11.50px;transform:scaleX(0.9458);transform-origin:left;color:#2a2d35;">Apmokėjimas už viršvalandžius (suminė darbo</div>
</div><div id="t79" class="t" style="left:690.61px;top:314px;font-size:11.50px;line-height:11.50px;transform:scaleX(0.9458);transform-origin:left;color:#1d8468;">Priskaitymas</div>
<div id="t80" class="t" style="left:804.00px;top:314px;font-size:11.50px;line-height:11.50px;transform:scaleX(0.9495);transform-origin:left;color:#2a2d35;">008</div>
<div id="t81" class="t" style="left:879.80px;top:314px;font-size:11.50px;line-height:11.50px;transform:scaleX(0.8863);transform-origin:left;color:#2a2d35;">2025 Rugsėjis</div>
<div id="t82" class="t" style="right:760.80px;top:314px;font-size:11.50px;line-height:11.50px;transform:scaleX(0.9495);transform-origin:right;color:#2a2d35;">20.00</div>
<div class="b clip" style="left:1072px;top:304.10px;width:74.5px;height:29px"><div id="t83" class="t" style="left:0.77px;top:10px;font-size:11.50px;line-height:11.50px;transform:scaleX(0.9458);transform-origin:left;color:#2a2d35;">Apmokėjimas už</div>
</div><div id="t84" class="t" style="right:535.80px;top:314px;font-size:11.50px;line-height:11.50px;transform:scaleX(0.9495);transform-origin:right;color:#2a2d35;">222.20</div>
<div id="t85" class="t" style="left:1410.00px;top:314px;font-size:11.50px;line-height:11.50px;transform:scaleX(0.9458);transform-origin:left;color:#2a2d35;">Centrinis</div>
<div class="b" style="left:1523.20px;top:307.95px;width:88.60px;height:22.70px;background:#c6ddfb;border-radius:4px;"></div>
<div id="t86" class="t" style="left:1533.80px;top:314px;font-size:11.50px;line-height:11.50px;transform:scaleX(0.9458);transform-origin:left;color:#2e3a4e;">Naujas</div>
<div id="t87" class="t" style="right:101.00px;top:314px;font-size:11.50px;line-height:11.50px;transform:scaleX(0.9495);transform-origin:right;color:#2a2d35;">11.11</div>
<svg class="b" style="left:1715.00px;top:313.10px" width="10" height="10" viewBox="0 0 10 10"><path d="M1 2 L9 2 M1 5 L9 5 M1 8 L9 8" stroke="#bbb" stroke-width="1"/></svg>
<div class="b" style="left:249.00px;top:334.30px;width:3.00px;height:28.30px;background:#9aa0a8;"></div>
<div class="b" style="left:269.20px;top:343.75px;width:11.40px;height:11.40px;border:1.2px solid #d3d3d6;border-radius:3px;box-sizing:border-box;"></div>
<svg class="b" style="left:303.20px;top:345.35px" width="4" height="11" viewBox="0 0 4 11"><circle cx="2" cy="1.6" r="1.1" fill="#333"/><circle cx="2" cy="5.3" r="1.1" fill="#333"/><circle cx="2" cy="9" r="1.1" fill="#333"/></svg>
<div id="t88" class="t" style="left:331.81px;top:344px;font-size:11.50px;line-height:11.50px;transform:scaleX(0.8593);transform-origin:left;color:#2a2d35;">K100</div>
<div class="b clip" style="left:444px;top:333.50px;width:208px;height:29px"><div id="t89" class="t" style="left:0.22px;top:11px;font-size:11.50px;line-height:11.50px;transform:scaleX(0.9458);transform-origin:left;color:#2a2d35;">NPD</div>
</div><div id="t90" class="t" style="left:690.61px;top:344px;font-size:11.50px;line-height:11.50px;transform:scaleX(0.9458);transform-origin:left;color:#a3a6ad;">Kintamasis</div>
<div id="t91" class="t" style="left:879.80px;top:344px;font-size:11.50px;line-height:11.50px;transform:scaleX(0.8863);transform-origin:left;color:#2a2d35;">2025 Rugsėjis</div>
<div class="b clip" style="left:1072px;top:333.50px;width:74.5px;height:29px"><div id="t92" class="t" style="left:-0.18px;top:11px;font-size:11.50px;line-height:11.50px;transform:scaleX(0.9458);transform-origin:left;color:#2a2d35;">NPD</div>
</div><div id="t93" class="t" style="right:423.03px;top:344px;font-size:11.50px;line-height:11.50px;transform:scaleX(0.9495);transform-origin:right;color:#2a2d35;">75.56</div>
<div class="b" style="left:1523.20px;top:337.50px;width:88.60px;height:22.70px;background:#c6ddfb;border-radius:4px;"></div>
<div id="t94" class="t" style="left:1533.80px;top:344px;font-size:11.50px;line-height:11.50px;transform:scaleX(0.9458);transform-origin:left;color:#2e3a4e;">Naujas</div>
<div id="t95" class="t" style="right:101.00px;top:344px;font-size:11.50px;line-height:11.50px;transform:scaleX(0.9495);transform-origin:right;color:#2a2d35;">75.56</div>
<div class="b" style="left:249.00px;top:364.00px;width:3.00px;height:27.70px;background:#e07060;"></div>
<div class="b" style="left:269.20px;top:373.15px;width:11.40px;height:11.40px;border:1.2px solid #d3d3d6;border-radius:3px;box-sizing:border-box;"></div>
<svg class="b" style="left:303.20px;top:374.75px" width="4" height="11" viewBox="0 0 4 11"><circle cx="2" cy="1.6" r="1.1" fill="#333"/><circle cx="2" cy="5.3" r="1.1" fill="#333"/><circle cx="2" cy="9" r="1.1" fill="#333"/></svg>
<div id="t96" class="t" style="left:331.81px;top:373px;font-size:11.50px;line-height:11.50px;transform:scaleX(0.8593);transform-origin:left;color:#2a2d35;">A710</div>
<div class="b clip" style="left:444px;top:363.20px;width:208px;height:29px"><div id="t97" class="t" style="left:0.22px;top:10px;font-size:11.50px;line-height:11.50px;transform:scaleX(0.9458);transform-origin:left;color:#2a2d35;">Pajamų mokestis nuo darbo užmokesčio (2025)</div>
</div><div id="t98" class="t" style="left:691.55px;top:373px;font-size:11.50px;line-height:11.50px;transform:scaleX(0.9458);transform-origin:left;color:#e4664f;">Atskaitymas</div>
<div id="t99" class="t" style="left:804.00px;top:373px;font-size:11.50px;line-height:11.50px;transform:scaleX(0.9495);transform-origin:left;color:#2a2d35;">008</div>
<div id="t100" class="t" style="left:879.80px;top:373px;font-size:11.50px;line-height:11.50px;transform:scaleX(0.8863);transform-origin:left;color:#2a2d35;">2025 Rugsėjis</div>
<div class="b clip" style="left:1072px;top:363.20px;width:74.5px;height:29px"><div id="t101" class="t" style="left:-0.18px;top:10px;font-size:11.50px;line-height:11.50px;transform:scaleX(0.9458);transform-origin:left;color:#2a2d35;">Pajamų mokestis</div>
</div><div id="t102" class="t" style="right:423.03px;top:373px;font-size:11.50px;line-height:11.50px;transform:scaleX(0.9495);transform-origin:right;color:#2a2d35;">473.77</div>
<div id="t103" class="t" style="left:1410.00px;top:373px;font-size:11.50px;line-height:11.50px;transform:scaleX(0.9458);transform-origin:left;color:#2a2d35;">Centrinis</div>
<div class="b" style="left:1523.20px;top:366.90px;width:88.60px;height:22.70px;background:#c6ddfb;border-radius:4px;"></div>
<div id="t104" class="t" style="left:1533.80px;top:373px;font-size:11.50px;line-height:11.50px;transform:scaleX(0.9458);transform-origin:left;color:#2e3a4e;">Naujas</div>
<div class="b" style="left:249.00px;top:393.10px;width:3.00px;height:27.50px;background:#e07060;"></div>
<div class="b" style="left:269.20px;top:402.15px;width:11.40px;height:11.40px;border:1.2px solid #d3d3d6;border-radius:3px;box-sizing:border-box;"></div>
<svg class="b" style="left:303.20px;top:403.75px" width="4" height="11" viewBox="0 0 4 11"><circle cx="2" cy="1.6" r="1.1" fill="#333"/><circle cx="2" cy="5.3" r="1.1" fill="#333"/><circle cx="2" cy="9" r="1.1" fill="#333"/></svg>
<div id="t105" class="t" style="left:331.81px;top:402px;font-size:11.50px;line-height:11.50px;transform:scaleX(0.8593);transform-origin:left;color:#2a2d35;">A810</div>
<div class="b clip" style="left:444px;top:392.30px;width:208px;height:29px"><div id="t106" class="t" style="left:0.22px;top:10px;font-size:11.50px;line-height:11.50px;transform:scaleX(0.9458);transform-origin:left;color:#2a2d35;">Sodros mokestis</div>
</div><div id="t107" class="t" style="left:691.55px;top:402px;font-size:11.50px;line-height:11.50px;transform:scaleX(0.9458);transform-origin:left;color:#e4664f;">Atskaitymas</div>
<div id="t108" class="t" style="left:804.00px;top:402px;font-size:11.50px;line-height:11.50px;transform:scaleX(0.9495);transform-origin:left;color:#2a2d35;">008</div>
<div id="t109" class="t" style="left:879.80px;top:402px;font-size:11.50px;line-height:11.50px;transform:scaleX(0.8863);transform-origin:left;color:#2a2d35;">2025 Rugsėjis</div>
<div class="b clip" style="left:1072px;top:392.30px;width:74.5px;height:29px"><div id="t110" class="t" style="left:-0.18px;top:10px;font-size:11.50px;line-height:11.50px;transform:scaleX(0.9458);transform-origin:left;color:#2a2d35;">Sodros mokestis</div>
</div><div id="t111" class="t" style="right:423.03px;top:402px;font-size:11.50px;line-height:11.50px;transform:scaleX(0.9495);transform-origin:right;color:#2a2d35;">476.66</div>
<div id="t112" class="t" style="left:1410.00px;top:402px;font-size:11.50px;line-height:11.50px;transform:scaleX(0.9458);transform-origin:left;color:#2a2d35;">Centrinis</div>
<div class="b" style="left:1523.20px;top:395.90px;width:88.60px;height:22.70px;background:#c6ddfb;border-radius:4px;"></div>
<div id="t113" class="t" style="left:1533.80px;top:402px;font-size:11.50px;line-height:11.50px;transform:scaleX(0.9458);transform-origin:left;color:#2e3a4e;">Naujas</div>
<div class="b" style="left:249.00px;top:422.00px;width:3.00px;height:27.60px;background:#ff2d2d;"></div>
<div class="b" style="left:269.20px;top:431.10px;width:11.40px;height:11.40px;border:1.2px solid #d3d3d6;border-radius:3px;box-sizing:border-box;"></div>
<svg class="b" style="left:303.20px;top:432.70px" width="4" height="11" viewBox="0 0 4 11"><circle cx="2" cy="1.6" r="1.1" fill="#333"/><circle cx="2" cy="5.3" r="1.1" fill="#333"/><circle cx="2" cy="9" r="1.1" fill="#333"/></svg>
<div id="t114" class="t" style="left:331.81px;top:431px;font-size:11.50px;line-height:11.50px;transform:scaleX(0.8593);transform-origin:left;color:#2a2d35;">M100</div>
<div class="b clip" style="left:444px;top:421.20px;width:208px;height:29px"><div id="t115" class="t" style="left:0.22px;top:10px;font-size:11.50px;line-height:11.50px;transform:scaleX(0.9458);transform-origin:left;color:#2a2d35;">Darbdavio sodra</div>
</div><div id="t116" class="t" style="left:690.61px;top:431px;font-size:11.50px;line-height:11.50px;transform:scaleX(0.9458);transform-origin:left;color:#f0323f;">Įmonės mokesčiai</div>
<div id="t117" class="t" style="left:804.00px;top:431px;font-size:11.50px;line-height:11.50px;transform:scaleX(0.9495);transform-origin:left;color:#2a2d35;">008</div>
<div id="t118" class="t" style="left:879.80px;top:431px;font-size:11.50px;line-height:11.50px;transform:scaleX(0.8863);transform-origin:left;color:#2a2d35;">2025 Rugsėjis</div>
<div class="b clip" style="left:1072px;top:421.20px;width:74.5px;height:29px"><div id="t119" class="t" style="left:-0.18px;top:10px;font-size:11.50px;line-height:11.50px;transform:scaleX(0.9458);transform-origin:left;color:#2a2d35;">Darbdavio sodra</div>
</div><div id="t120" class="t" style="right:423.03px;top:431px;font-size:11.50px;line-height:11.50px;transform:scaleX(0.9495);transform-origin:right;color:#2a2d35;">43.27</div>
<div id="t121" class="t" style="left:1410.00px;top:431px;font-size:11.50px;line-height:11.50px;transform:scaleX(0.9458);transform-origin:left;color:#2a2d35;">Centrinis</div>
<div class="b" style="left:1523.20px;top:424.85px;width:88.60px;height:22.70px;background:#c6ddfb;border-radius:4px;"></div>
<div id="t122" class="t" style="left:1533.80px;top:431px;font-size:11.50px;line-height:11.50px;transform:scaleX(0.9458);transform-origin:left;color:#2e3a4e;">Naujas</div>
<div class="b" style="left:249.20px;top:275.90px;width:1037.00px;height:61.70px;border:3px solid #fb7b39;box-sizing:border-box;"></div>
<div class="b" style="left:249.00px;top:459.00px;width:1547.80px;height:15.00px;background:#f8f8f8;"></div>
<div class="b" style="left:271.50px;top:462.00px;width:1136.50px;height:9.00px;background:#8a8a8a;border-radius:5px;"></div>
<svg class="b" style="left:256.00px;top:461.00px" width="8" height="10" viewBox="0 0 8 10"><path d="M6.5 1 L1.5 5 L6.5 9 Z" fill="#666"/></svg>
<svg class="b" style="left:1781.00px;top:461.00px" width="8" height="10" viewBox="0 0 8 10"><path d="M1.5 1 L6.5 5 L1.5 9 Z" fill="#666"/></svg>
<svg class="b" style="left:260.50px;top:484.50px" width="11" height="11" viewBox="0 0 11 11"><circle cx="5.5" cy="5.5" r="4.6" fill="none" stroke="#222" stroke-width="1.2"/><circle cx="5.5" cy="5.5" r="2" fill="#222"/></svg>
<div id="t123" class="t" style="left:276.81px;top:485px;font-size:11.48px;line-height:11.48px;transform:scaleX(0.9629);transform-origin:left;color:#22252d;">Pridėti eilutę</div>
</body></html>
